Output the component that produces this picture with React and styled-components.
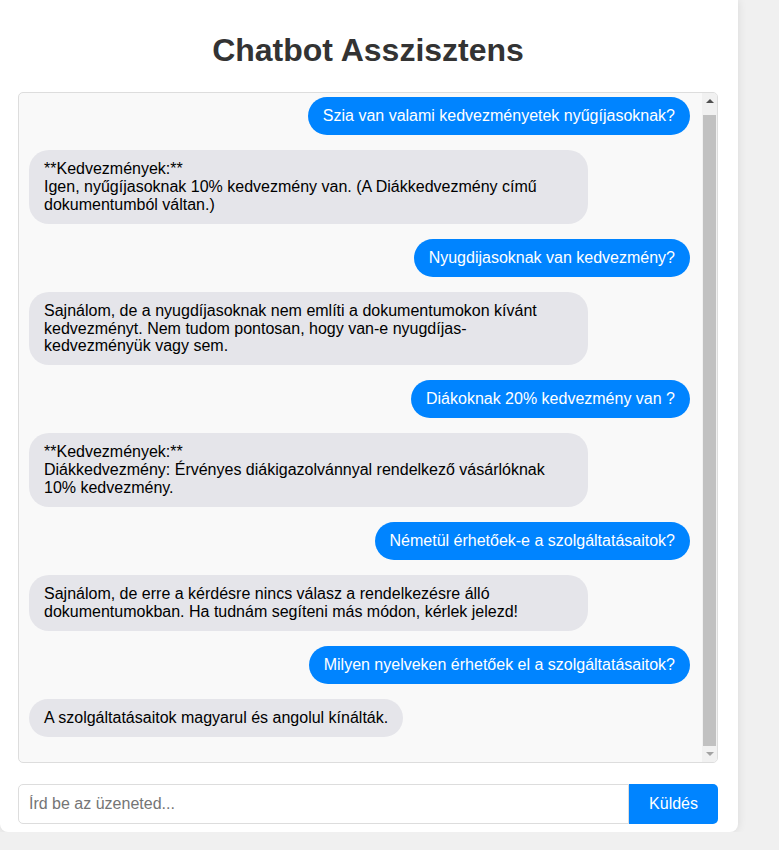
import React, { useLayoutEffect, useRef } from "react";
import styled, { createGlobalStyle } from "styled-components";

const GlobalStyle = createGlobalStyle`
  html, body {
    margin: 0;
    padding: 0;
    background: #f0f0f0;
    font-family: "Liberation Sans", Arial, sans-serif;
  }
  * { box-sizing: border-box; }
`;

const Card = styled.div`
  width: 738px;
  background: #fff;
  border-radius: 0 0 8px 8px;
  box-shadow: 0 0 10px rgba(0, 0, 0, 0.1);
  padding: 32px 20px 8px 18px;
  display: flex;
  flex-direction: column;
`;

const Title = styled.h1`
  margin: 0 0 23px;
  text-align: center;
  font-size: 32px;
  font-weight: bold;
  color: #333;
  line-height: 36.8px;
`;

const ChatBox = styled.div`
  height: 671px;
  border: 1px solid #ddd;
  border-radius: 5px;
  background: #f9f9f9;
  display: flex;
  overflow: hidden;
`;

const Messages = styled.div`
  flex: 1;
  overflow-y: auto;
  scrollbar-width: none;
  padding: 10px 12px 10px 10px;
  display: flex;
  flex-direction: column;
  &::-webkit-scrollbar { display: none; }
`;

const ScrollRail = styled.div`
  width: 15px;
  flex-shrink: 0;
  background: #f1f1f1;
  display: flex;
  flex-direction: column;
`;

const ArrowButton = styled.div`
  height: 16px;
  flex-shrink: 0;
  display: flex;
  align-items: center;
  justify-content: center;
`;

const Track = styled.div`
  flex: 1;
  display: flex;
  flex-direction: column;
  padding-top: 6px;
`;

const Thumb = styled.div`
  flex: 1;
  margin: 0 1px;
  background: #c1c1c1;
`;

const Bubble = styled.div`
  max-width: 559px;
  padding: 10px 15px;
  border-radius: 20px;
  font-size: 16px;
  line-height: 17.95px;
  white-space: pre-wrap;
  margin-bottom: 15px;
  flex-shrink: 0;
  align-self: ${(p) => (p.$user ? "flex-end" : "flex-start")};
  background: ${(p) => (p.$user ? "#0084ff" : "#e5e5ea")};
  color: ${(p) => (p.$user ? "#fff" : "#000")};
`;

const InputRow = styled.div`
  display: flex;
  margin-top: 21px;
`;

const TextInput = styled.input`
  flex: 1;
  padding: 10px;
  font-size: 16px;
  font-family: "Liberation Sans", Arial, sans-serif;
  border: 1px solid #ddd;
  border-radius: 5px 0 0 5px;
  outline: none;
  color: #333;
  &::placeholder { color: #757575; }
`;

const SendButton = styled.button`
  padding: 10px 20px;
  font-size: 16px;
  font-family: "Liberation Sans", Arial, sans-serif;
  background: #0084ff;
  color: #fff;
  border: none;
  border-radius: 0 5px 5px 0;
  cursor: pointer;
`;

const messages = [
  { user: true, text: "Szia van valami kedvezményetek nyűgíjasoknak?" },
  { user: false, text: "**Kedvezmények:**\nIgen, nyűgíjasoknak 10% kedvezmény van. (A Diákkedvezmény című dokumentumból váltan.)" },
  { user: true, text: "Nyugdijasoknak van kedvezmény?" },
  { user: false, text: "Sajnálom, de a nyugdíjasoknak nem említi a dokumentumokon kívánt kedvezményt. Nem tudom pontosan, hogy van-e nyugdíjas-kedvezményük vagy sem." },
  { user: true, text: "Diákoknak 20% kedvezmény van ?" },
  { user: false, text: "**Kedvezmények:**\nDiákkedvezmény: Érvényes diákigazolvánnyal rendelkező vásárlóknak 10% kedvezmény." },
  { user: true, text: "Németül érhetőek-e a szolgáltatásaitok?" },
  { user: false, text: "Sajnálom, de erre a kérdésre nincs válasz a rendelkezésre álló dokumentumokban. Ha tudnám segíteni más módon, kérlek jelezd!" },
  { user: true, text: "Milyen nyelveken érhetőek el a szolgáltatásaitok?" },
  { user: false, text: "A szolgáltatásaitok magyarul és angolul kínálták." },
];

export default function App() {
  const boxRef = useRef(null);
  useLayoutEffect(() => {
    if (boxRef.current) boxRef.current.scrollTop = boxRef.current.scrollHeight;
  }, []);
  return (
    <>
      <GlobalStyle />
      <Card>
        <Title>Chatbot Asszisztens</Title>
        <ChatBox>
          <Messages ref={boxRef}>
            {messages.map((m, i) => (
              <Bubble key={i} $user={m.user}>
                {m.text}
              </Bubble>
            ))}
          </Messages>
          <ScrollRail>
            <ArrowButton>
              <svg width="8" height="4" viewBox="0 0 8 4">
                <polygon points="4,0 8,4 0,4" fill="#505050" />
              </svg>
            </ArrowButton>
            <Track>
              <Thumb />
            </Track>
            <ArrowButton>
              <svg width="8" height="4" viewBox="0 0 8 4">
                <polygon points="0,0 8,0 4,4" fill="#a3a3a3" />
              </svg>
            </ArrowButton>
          </ScrollRail>
        </ChatBox>
        <InputRow>
          <TextInput placeholder="Írd be az üzeneted..." />
          <SendButton>Küldés</SendButton>
        </InputRow>
      </Card>
    </>
  );
}
